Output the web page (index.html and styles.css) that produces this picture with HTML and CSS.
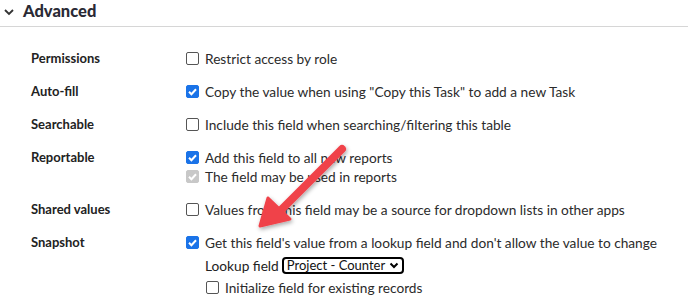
FILE: index.html
```html
<!doctype html>
<html>
    <head>
        <meta charset="utf-8" />
        <title>Advanced</title>
        <link rel="stylesheet" href="styles.css">
    </head>
    <body>
        <section class="panel">
            <header class="panel-head">
                <svg class="chev" width="12" height="8" viewBox="0 0 12 8"><path d="M2 2l4 4 4-4" fill="none" stroke="#333" stroke-width="1.8"/></svg>
                <h2>Advanced</h2>
            </header>
            <div class="props">
                <div class="lbl">Permissions</div>
                <div class="opts">
                    <label class="opt"><span class="box"></span>Restrict access by role</label>
                </div>

                <div class="lbl">Auto-fill</div>
                <div class="opts">
                    <label class="opt"><span class="box on"></span>Copy the value when using "Copy this Task" to add a new Task</label>
                </div>

                <div class="lbl">Searchable</div>
                <div class="opts">
                    <label class="opt"><span class="box"></span>Include this field when searching/filtering this table</label>
                </div>

                <div class="lbl">Reportable</div>
                <div class="opts">
                    <label class="opt"><span class="box on"></span>Add this field to all new reports</label>
                    <label class="opt"><span class="box on dim"></span>The field may be used in reports</label>
                </div>

                <div class="lbl">Shared values</div>
                <div class="opts">
                    <label class="opt"><span class="box"></span>Values from this field may be a source for dropdown lists in other apps</label>
                </div>

                <div class="lbl">Snapshot</div>
                <div class="opts">
                    <label class="opt"><span class="box on"></span>Get this field's value from a lookup field and don't allow the value to change</label>
                    <div class="lookup">Lookup field <span class="select">Project - Counter <svg width="10" height="7" viewBox="0 0 10 7"><path d="M1.5 1.5l3.5 3.5 3.5-3.5" fill="none" stroke="#000" stroke-width="2"/></svg></span></div>
                    <label class="opt sub"><span class="box"></span>Initialize field for existing records</label>
                </div>
            </div>
            <svg class="arrow" width="688" height="298" viewBox="0 0 688 298">
                <defs>
                    <filter id="sh" x="-20%" y="-20%" width="140%" height="140%">
                        <feDropShadow dx="1" dy="2" stdDeviation="2" flood-color="#000" flood-opacity="0.35"/>
                    </filter>
                </defs>
                <g filter="url(#sh)" fill="#f0424a" stroke="#f0424a">
                    <line x1="342" y1="157" x2="282" y2="217" stroke-width="8" stroke-linecap="round"/>
                    <path d="M260 234 L268 206 L290 227 Z" stroke-width="3" stroke-linejoin="round"/>
                </g>
            </svg>
        </section>
    </body>
</html>
```

FILE: styles.css
```css
html, body {
    margin: 0px;
    padding: 0px;
    background: #fff;
}

body {
    font-family: Lato, "Noto Sans", sans-serif;
    color: #222;
    width: 688px;
    height: 298px;
    overflow: hidden;
}

.panel {
    position: relative;
    height: 298px;
}

.panel-head {
    display: flex;
    align-items: center;
    gap: 8px;
    height: 30px;
    padding-left: 3px;
    border-bottom: 1px solid #d6d6d6;
    margin-top: -8px;
    padding-top: 4px;
    box-sizing: content-box;
}

.panel-head h2 {
    margin: 0px;
    font-size: 16.5px;
    font-weight: 900;
    color: #2a2a35;
}

.chev {
    margin-top: 2px;
}

.props {
    display: grid;
    grid-template-columns: 155px 1fr;
    row-gap: 14px;
    padding: 22px 0 0 31px;
    font-size: 13.7px;
    line-height: 19px;
}

.lbl {
    font-weight: 700;
    font-size: 13px;
    color: #222;
}

.opts {
    display: flex;
    flex-direction: column;
}

.opt {
    display: flex;
    align-items: center;
    gap: 6px;
    color: #2b2b2b;
    white-space: nowrap;
}

.opt.sub {
    margin-left: 20px;
    margin-top: 3px;
}

.box {
    width: 11px;
    height: 11px;
    border: 1px solid #555;
    border-radius: 2px;
    flex: none;
    background: #fff;
}

.box.on {
    background: #1a73e8 url("data:image/svg+xml,%3Csvg xmlns='http://www.w3.org/2000/svg' viewBox='0 0 13 13'%3E%3Cpath d='M3 6.8l2.4 2.4L10 4.2' fill='none' stroke='white' stroke-width='2'/%3E%3C/svg%3E") center / 13px 13px no-repeat;
    border-color: #1a73e8;
}

.box.on.dim {
    background-color: #c8c8c8;
    border-color: #c8c8c8;
}

.lookup {
    display: flex;
    align-items: center;
    gap: 3px;
    margin: 4px 0 0 19px;
    white-space: nowrap;
}

.select {
    display: inline-flex;
    align-items: center;
    gap: 4px;
    border: 2px solid #000;
    border-radius: 4px;
    padding: 0 3px;
    height: 13px;
    line-height: 13px;
    font-size: 13px;
    color: #111;
}

.arrow {
    position: absolute;
    left: 0px;
    top: 0px;
    pointer-events: none;
}
```
